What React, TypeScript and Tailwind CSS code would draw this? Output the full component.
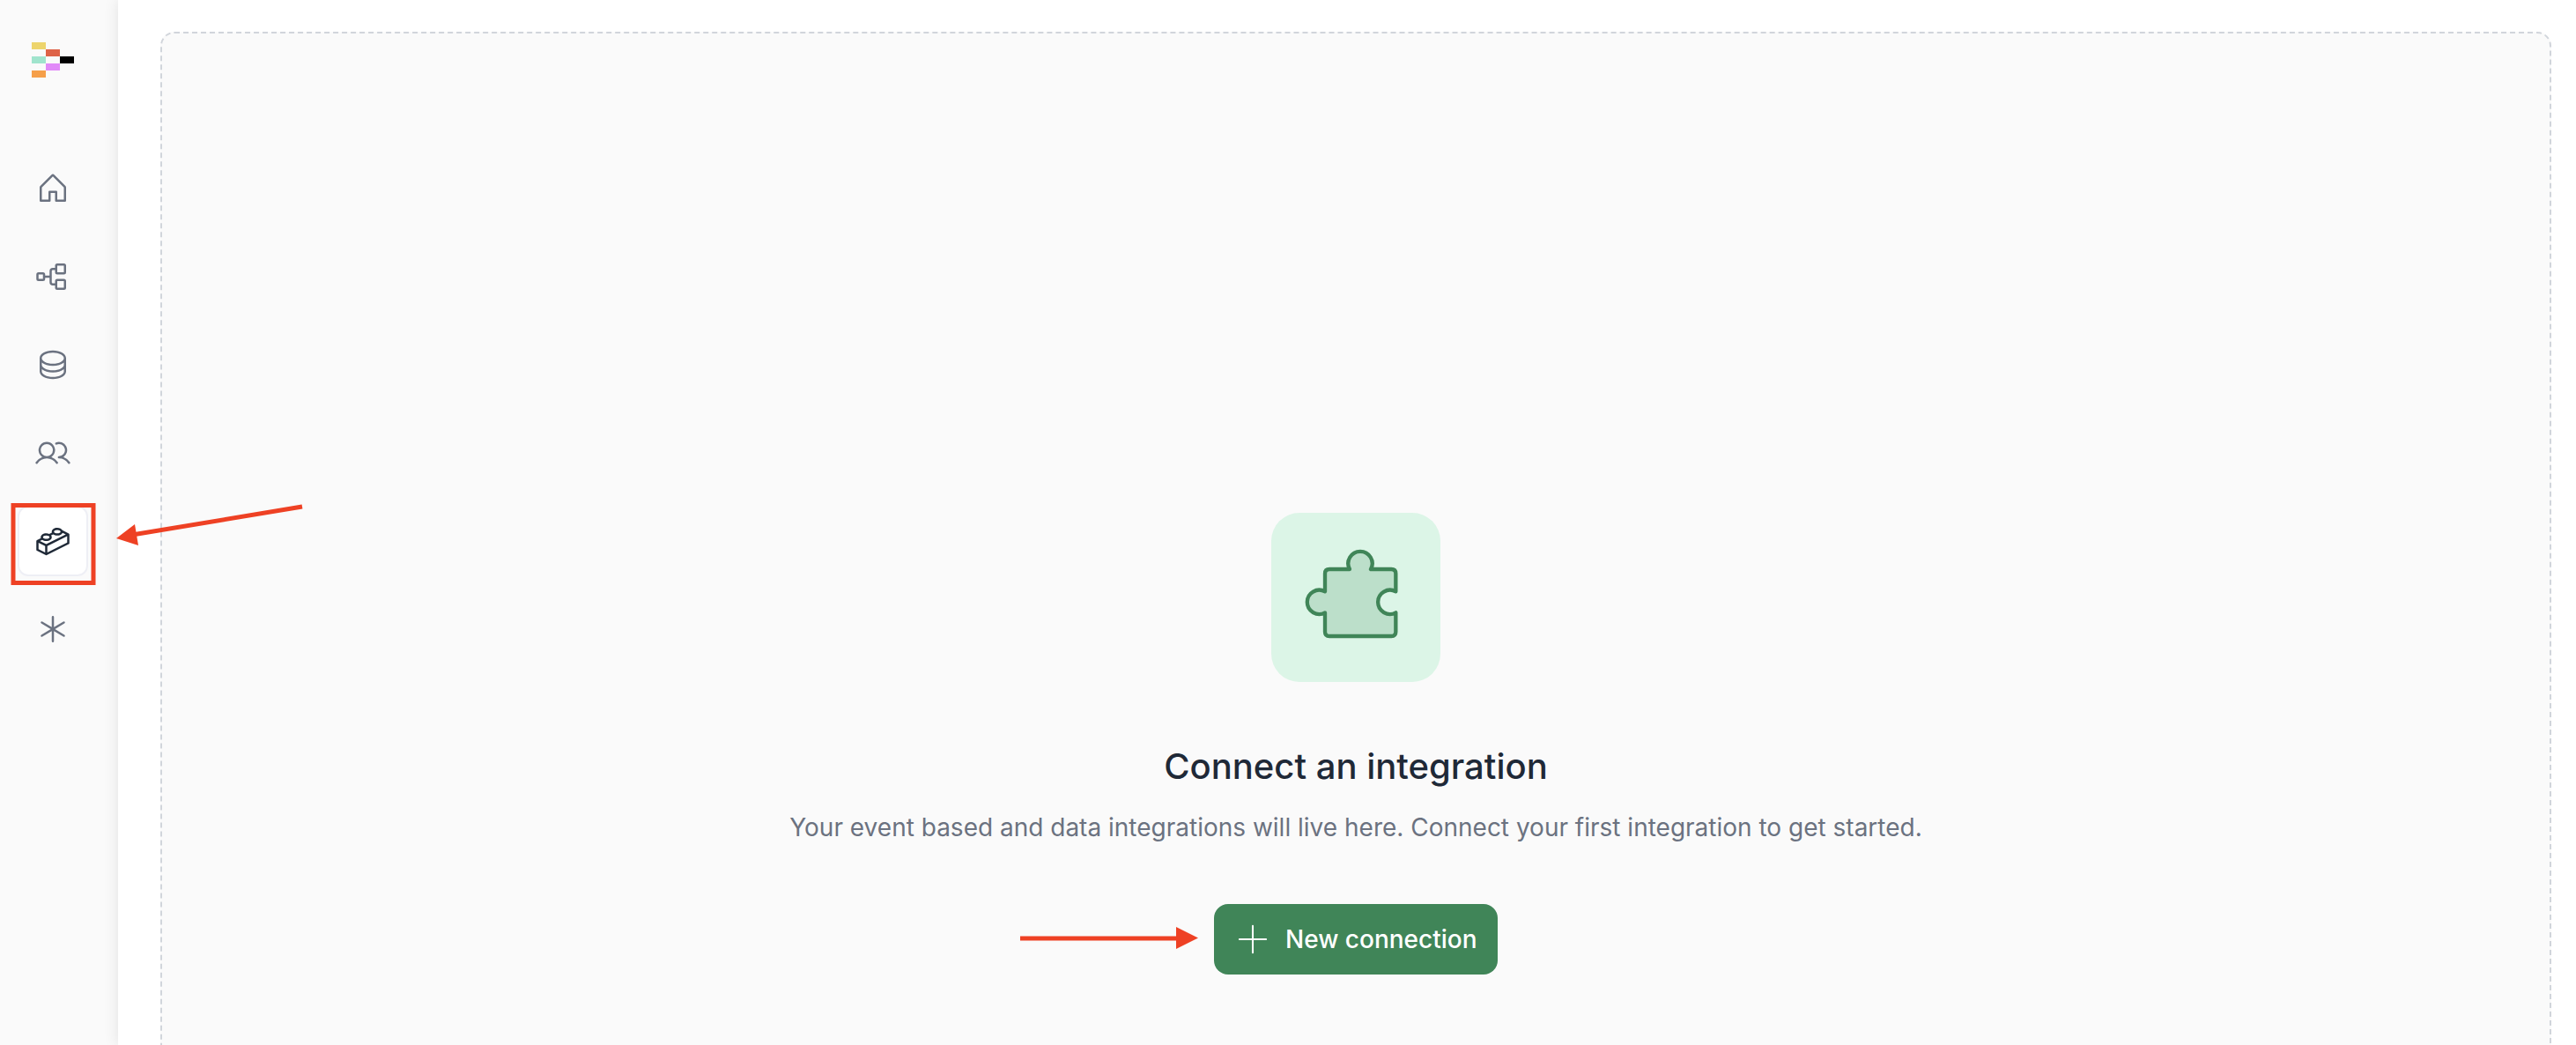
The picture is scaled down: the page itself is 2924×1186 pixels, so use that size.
import React from "react";
import {
  PiHouse,
  PiTreeStructure,
  PiDatabase,
  PiUsers,
  PiLego,
  PiAsterisk,
  PiPlusLight,
} from "react-icons/pi";

function Logo() {
  return (
    <svg width="48" height="40" viewBox="0 0 48 40" className="block">
      <rect x="0" y="0" width="16" height="8" fill="#edd46c" />
      <rect x="16" y="8" width="16" height="8" fill="#de6348" />
      <rect x="0" y="16" width="16" height="8" fill="#a0e4cd" />
      <rect x="32" y="16" width="16" height="8" fill="#000000" />
      <rect x="16" y="24" width="16" height="8" fill="#e18af8" />
      <rect x="0" y="32" width="16" height="8" fill="#f59f4a" />
    </svg>
  );
}

function Puzzle() {
  return (
    <svg width="192" height="192" viewBox="69 36 576 576" className="block">
      <path
        d="M252 243 Q252 228 267 228 H336 A41 41 0 1 1 408 228 H478 Q493 228 493 243 V304 A41 41 0 1 0 493 376 V441 Q493 456 478 456 H267 Q252 456 252 441 V376 A41 41 0 1 1 252 304 Z"
        fill="#bcdfca"
        stroke="#408558"
        strokeWidth="13"
        strokeLinejoin="round"
      />
    </svg>
  );
}

const items = [
  { Icon: PiHouse },
  { Icon: PiTreeStructure },
  { Icon: PiDatabase },
  { Icon: PiUsers },
  { Icon: PiLego, active: true },
  { Icon: PiAsterisk },
];

export default function App() {
  return (
    <div className="relative flex h-[1186px] w-[2924px] overflow-hidden bg-white font-['Inter',sans-serif]">
      <aside className="flex h-full w-[134px] shrink-0 flex-col items-start bg-[#fafafa] pl-5">
        <div className="ml-4 mt-12">
          <Logo />
        </div>
        <nav className="mt-[86px] flex flex-col gap-5">
          {items.map(({ Icon, active }, i) => (
            <div
              key={i}
              className={
                active
                  ? "flex h-20 w-20 items-center justify-center rounded-xl border-2 border-[#eeeff5] bg-white text-[#1f2937]"
                  : "flex h-20 w-20 items-center justify-center text-[#6b7280]"
              }
            >
              <Icon size={40} />
            </div>
          ))}
        </nav>
      </aside>
      <main className="relative z-10 min-w-0 flex-1 bg-white pl-12 pr-7 pt-9 shadow-[0_0_16px_rgba(0,0,0,0.1)]">
        <section className="flex h-[1300px] flex-col items-center rounded-2xl border-2 border-dashed border-[#d1d5db] bg-[#fafafa] pt-[544px]">
          <div className="flex h-48 w-48 items-center justify-center rounded-[32px] bg-[#dcf5e7]">
            <Puzzle />
          </div>
          <h1 className="mt-[72px] text-[40px] font-medium leading-[48px] text-[#1f2937]">Connect an integration</h1>
          <p className="mt-[25px] text-[28px] leading-10 text-[#6b7280]">
            Your event based and data integrations will live here. Connect your first integration to get started.
          </p>
          <button className="mt-[67px] flex h-20 w-[322px] items-center gap-[15px] whitespace-nowrap rounded-2xl bg-[#408558] pl-[22px] text-[28px] font-medium text-white">
            <PiPlusLight size={44} />
            <span>New connection</span>
          </button>
        </section>
      </main>
      <svg width="2924" height="1186" viewBox="0 0 2924 1186" className="pointer-events-none absolute left-0 top-0 z-20">
        <rect x="15" y="573.5" width="91" height="88" fill="none" stroke="#ee4124" strokeWidth="5" />
        <line x1="343" y1="575" x2="150" y2="607" stroke="#ee4124" strokeWidth="5" />
        <polygon points="132,611 153,595 157,619" fill="#ee4124" />
        <line x1="1158" y1="1065" x2="1337" y2="1065" stroke="#ee4124" strokeWidth="5" />
        <polygon points="1335,1052 1360,1064.5 1335,1077" fill="#ee4124" />
      </svg>
    </div>
  );
}
